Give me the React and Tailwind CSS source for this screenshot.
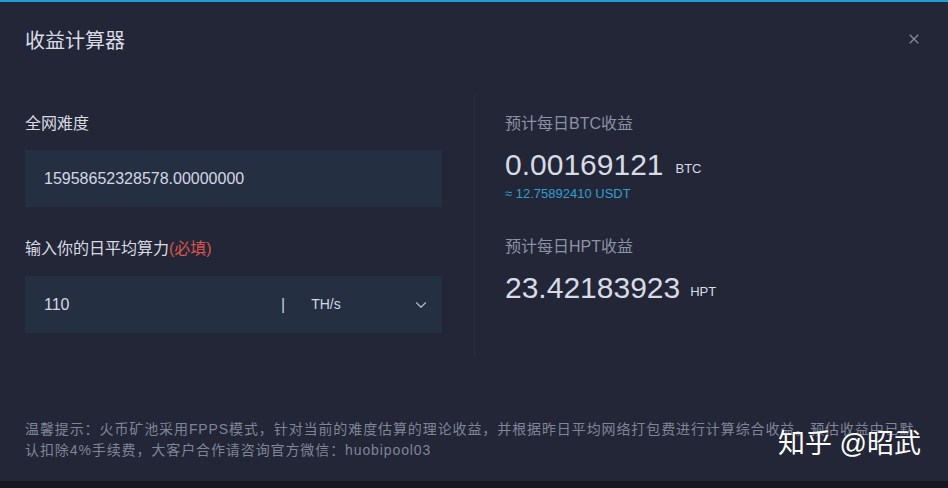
import { ChevronDown, X } from "lucide-react";

const font = { fontFamily: '"Microsoft YaHei", "Liberation Sans", "Noto Sans CJK SC", sans-serif' };

export default function App() {
  return (
    <div className="w-[948px] h-[488px] bg-[#161720] overflow-hidden" style={font}>
      <div className="h-[481px] bg-[#232636] border-t-2 border-[#1f9fd3] relative flex flex-col">
        {/* header */}
        <div className="flex items-center justify-between pl-[25px] pr-[26px] pt-[24px]">
          <h1 className="text-[20px] leading-[30px] text-[#d9dce6]">收益计算器</h1>
          <button className="text-[#8a8fa3] -mt-[5px]"><X size={16} strokeWidth={1.6} /></button>
        </div>

        <div className="flex mt-[56px] pl-[25px]">
          {/* left */}
          <div className="w-[417px] flex flex-col">
            <label className="text-[16px] leading-[24px] text-[#d7dae3]">全网难度</label>
            <div className="mt-[14px] h-[57px] bg-[#252f42] flex items-center pl-[19px] text-[16px] text-[#d3d7e2]">
              15958652328578.00000000
            </div>
            <label className="mt-[30px] text-[16px] leading-[24px] text-[#d7dae3]">
              输入你的日平均算力<span className="text-[#d9534f]">(必填)</span>
            </label>
            <div className="mt-[15px] h-[57px] bg-[#252f42] flex items-center pl-[19px] pr-[12px] text-[#d3d7e2]">
              <span className="w-[237px] text-[16px]">110</span>
              <span className="text-[16px] text-[#c9cdd8]">|</span>
              <span className="ml-[26px] text-[14px] flex-1">TH/s</span>
              <ChevronDown size={18} strokeWidth={1.5} className="text-[#b7bccb]" />
            </div>
          </div>

          {/* divider */}
          <div className="ml-[32px] -mt-[19px] w-px h-[263px] bg-[#2c3042]" />

          {/* right */}
          <div className="ml-[30px] flex flex-col">
            <div className="text-[16px] leading-[24px] text-[#8c92a5]">预计每日BTC收益</div>
            <div className="mt-[11px] flex items-end text-[#d7dbe6]">
              <span className="text-[30px] leading-[36px]">0.00169121</span>
              <span className="ml-[12px] mb-[6px] text-[13px] leading-[16px]">BTC</span>
            </div>
            <div className="mt-[3px] text-[13px] leading-[16px] text-[#2f9fd0]">≈ 12.75892410 USDT</div>
            <div className="mt-[33px] text-[16px] leading-[24px] text-[#8c92a5]">预计每日HPT收益</div>
            <div className="mt-[11px] flex items-end text-[#d7dbe6]">
              <span className="text-[30px] leading-[36px]">23.42183923</span>
              <span className="ml-[10px] mb-[6px] text-[13px] leading-[16px]">HPT</span>
            </div>
          </div>
        </div>

        {/* footer tip */}
        <p className="mt-auto mb-[20px] px-[25px] text-[14px] leading-[21px] tracking-[0.9px] text-[#7f8598] whitespace-nowrap">
          温馨提示：火币矿池采用FPPS模式，针对当前的难度估算的理论收益，并根据昨日平均网络打包费进行计算综合收益。预估收益中已默
          <br />
          认扣除4%手续费，大客户合作请咨询官方微信：huobipool03
        </p>

        {/* watermark */}
        <div className="absolute left-[778px] top-[424px] text-[27px] leading-[36px] text-white">知乎 @昭武</div>
      </div>
    </div>
  );
}
